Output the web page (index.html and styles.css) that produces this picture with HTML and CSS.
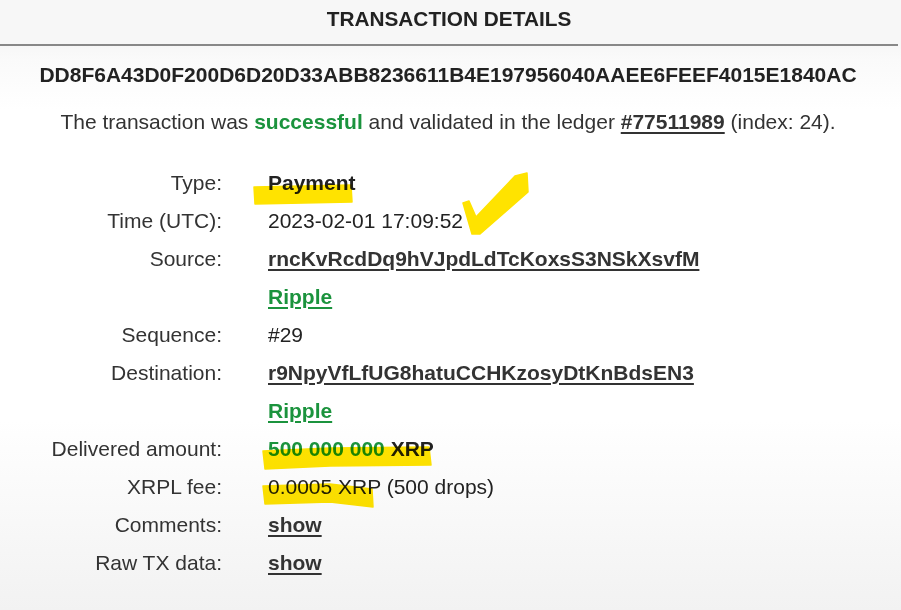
FILE: index.html
```html
<!DOCTYPE html>
<html lang="en">
<head>
    <meta charset="UTF-8">
    <meta name="viewport" content="width=device-width, initial-scale=1.0">
    <title>Transaction details</title>
    <link rel="stylesheet" href="styles.css">
</head>
<body>
    <div class="page">
        <header class="title-bar">
            <h1>TRANSACTION DETAILS</h1>
        </header>

        <main class="details">
            <p class="tx-hash">DD8F6A43D0F200D6D20D33ABB8236611B4E197956040AAEE6FEEF4015E1840AC</p>
            <p class="tx-status">The transaction was <b class="green">successful</b> and validated in the ledger <a href="#">#77511989</a> (index: 24).</p>

            <div class="tx-table">
                <div class="label">Type:</div>
                <div class="value"><b>Payment</b></div>

                <div class="label">Time (UTC):</div>
                <div class="value">2023-02-01 17:09:52</div>

                <div class="label">Source:</div>
                <div class="value"><a href="#">rncKvRcdDq9hVJpdLdTcKoxsS3NSkXsvfM</a></div>

                <div class="label"></div>
                <div class="value"><a href="#" class="green">Ripple</a></div>

                <div class="label">Sequence:</div>
                <div class="value">#29</div>

                <div class="label">Destination:</div>
                <div class="value"><a href="#">r9NpyVfLfUG8hatuCCHKzosyDtKnBdsEN3</a></div>

                <div class="label"></div>
                <div class="value"><a href="#" class="green">Ripple</a></div>

                <div class="label">Delivered amount:</div>
                <div class="value"><b class="green">500 000 000</b> <b>XRP</b></div>

                <div class="label">XRPL fee:</div>
                <div class="value">0.0005 XRP (500 drops)</div>

                <div class="label">Comments:</div>
                <div class="value"><a href="#">show</a></div>

                <div class="label">Raw TX data:</div>
                <div class="value"><a href="#">show</a></div>
            </div>
        </main>

        <!-- highlighter marks drawn over the screenshot -->
        <svg class="marks" width="901" height="610" viewBox="0 0 901 610">
            <polygon points="254,187 351,185 352,202 255,204"/>
            <polygon points="463,203 469,201 476,217 515,176 527,173 528,192 480,234 472,234"/>
            <polygon points="263,451 330,448 429,447 431,465 330,466 265,469"/>
            <polygon points="263,486 330,484 372,489 373,507 330,502 265,504"/>
        </svg>
    </div>
</body>
</html>
```

FILE: styles.css
```css
* {
    margin: 0;
    padding: 0;
    box-sizing: border-box;
}

html, body {
    height: 100%;
}

body {
    font-family: "Liberation Sans", Arial, sans-serif;
    font-size: 21px;
    color: #222;
    background: #fff;
}

.page {
    position: relative;
    min-height: 100vh;
    background: linear-gradient(to bottom, #f7f7f7 0, #f7f7f7 46px, #fafafa 60px, #fff 110px, #fff 420px, #f2f2f2 100%);
}

.title-bar {
    padding: 7px 0 13px;
    margin-right: 3px;
    border-bottom: 2px solid #888;
    text-align: center;
}

h1 {
    font-size: 20.8px;
    line-height: 1.15;
    font-weight: bold;
    color: #222;
}

.details {
    margin-right: 5px;
}

.tx-hash {
    margin-top: 17.5px;
    text-align: center;
    font-weight: bold;
    line-height: 1.15;
    color: #222;
}

.tx-status {
    margin-top: 22.4px;
    text-align: center;
    line-height: 1.15;
    color: #333;
}

a {
    color: #333;
    font-weight: bold;
    text-decoration: underline;
    text-decoration-thickness: 2px;
    text-underline-offset: 3px;
}

.green,
a.green {
    color: #1b933d;
}

.tx-table {
    display: grid;
    grid-template-columns: 222px 1fr;
    grid-auto-rows: 38px;
    column-gap: 46px;
    margin-top: 29.6px;
    line-height: 38px;
}

.label {
    text-align: right;
    color: #333;
    white-space: nowrap;
}

.value {
    color: #222;
    white-space: nowrap;
}

.marks {
    position: absolute;
    left: 0;
    top: 0;
    pointer-events: none;
    mix-blend-mode: multiply;
}

.marks polygon {
    fill: #ffe300;
    stroke: #ffe300;
    stroke-width: 1.5;
    stroke-linejoin: round;
}
```
